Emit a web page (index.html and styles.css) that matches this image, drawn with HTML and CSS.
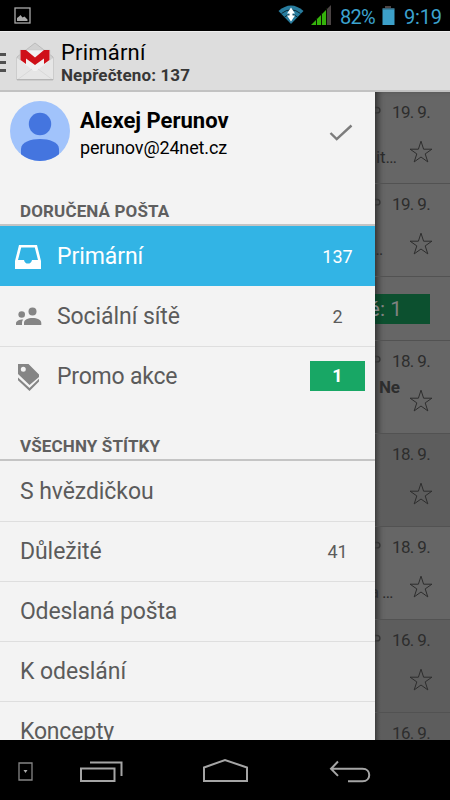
FILE: index.html
```html
<!DOCTYPE html>
<html lang="cs">
<head>
<meta charset="utf-8">
<title>Primární</title>
<link rel="stylesheet" href="styles.css">
</head>
<body>
<svg class="defs" width="0" height="0">
  <symbol id="star" viewBox="0 0 24 24"><path d="M12 1.2l2.600 8h8.300l-6.700 4.700 2.600 8L12 17l-6.800 4.900 2.600-8L1.100 9.200h8.300z" fill="none" stroke="#2d2d2d" stroke-width="1"/></symbol>
  <symbol id="clip" viewBox="0 0 8 10"><path d="M0 1.500h2.200a2.700 2.700 0 0 1 0 5.400H0" fill="none" stroke="#333" stroke-width="1.400"/></symbol>
</svg>
<div class="phone">
  <header class="status">
    <svg class="picture" width="18" height="18" viewBox="0 0 18 18"><rect x="1" y="1" width="15" height="15" fill="none" stroke="#aaa" stroke-width="1.300"/><path d="M3 14v-3l2-1.500 1.500-1.500 2 2.500 2-1 3 3V14z" fill="#aaa"/></svg>
    <svg class="wifi" width="26" height="20" viewBox="0 0 26 20"><path d="M.5 6Q13-5 25.500 6L13 19z" fill="#287c9e"/><path d="M3.500 8.500Q13 1 22.500 8.500M6.500 12Q13 7 19.500 12" fill="none" stroke="#07151c" stroke-width=".8"/><path d="M13 2.500l4 6H9zM13 16.500l-4-6h8z" fill="#fff"/><path d="M11.500 8h3v3h-3z" fill="#fff"/></svg>
    <svg class="signal" width="20" height="20" viewBox="0 0 20 20"><path d="M0 20L16 4v16z" fill="#35b30b"/><path d="M16 4l4-4v20h-4z" fill="#4b4444"/><path d="M5.500 13v7M10.500 8v12M15.500 3v17" stroke="#071600" stroke-width="1"/></svg>
    <span class="percent">82%</span>
    <svg class="battery" width="13" height="19" viewBox="0 0 13 19"><path d="M3 0h6v2H3z" fill="#4b4444"/><path d="M.5 2h12v2H.5z" fill="#35647a"/><path d="M.5 3.500h12V19H.5z" fill="#3ca0c9"/></svg>
    <span class="clock">9:19</span>
  </header>
  <div class="actionbar">
    <div class="burger"><i></i><i></i><i></i></div>
    <svg class="gmail" width="38" height="39" viewBox="0 0 38 39">
      <path d="M1 15L19 1l18 14v23H1z" fill="#d1d1d1" stroke="#bcbcbc"/>
      <path d="M4 8h30v22H4z" fill="#f1f1f1" stroke="#c9c9c9" stroke-width=".6"/>
      <path d="M1 16l18 14 18-14v22H1z" fill="#e6e6e6"/>
      <path d="M1 38l15-11M37 38L22 27" stroke="#d9d9d9" fill="none"/>
      <path d="M4.500 8H10l9 7.500L28 8h5.500v10L28 22v-5.500L19 23l-9-6.500V22l-5.500-4z" fill="#cf1018"/>
      <path d="M1 37.500h36" stroke="#b5b5b5"/>
    </svg>
    <div class="titles"><h1>Primární</h1><p>Nepřečteno: 137</p></div>
  </div>
  <main class="content">
    <nav class="drawer">
      <section class="account">
        <svg class="avatar" width="60" height="60" viewBox="0 0 60 60"><circle cx="30" cy="30" r="30" fill="#a1c3fb"/><circle cx="30" cy="23" r="11.200" fill="#4475df"/><path d="M11 53.200V48c0-7 10-10 19-10s19 3 19 10v5.200A30 30 0 0 1 11 53.200z" fill="#4475df"/></svg>
        <div class="who"><strong>Alexej Perunov</strong><span>perunov@24net.cz</span></div>
        <svg class="check" width="24" height="18" viewBox="0 0 24 18"><path d="M1.500 9l6.200 6.200L22.500 1.500" fill="none" stroke="#7c7c7c" stroke-width="2.400"/></svg>
      </section>
      <h2 class="inbox-heading"><span>DORUČENÁ POŠTA</span></h2>
      <ul>
        <li class="selected">
          <svg width="28" height="26" viewBox="0 0 28 26"><path fill-rule="evenodd" d="M5 1h18l4 16v8H1v-8zM7.200 3.500L4 16h6c.7 2.700 2 3.600 4 3.600s3.300-.9 4-3.600h6L20.800 3.500z" fill="#fff"/></svg>
          <span class="label">Primární</span><span class="count">137</span>
        </li>
        <li class="after-selected">
          <svg width="28" height="26" viewBox="0 0 28 26"><g fill="#858585"><circle cx="18.500" cy="7.400" r="4"/><circle cx="7.700" cy="10.500" r="3.300"/><path d="M10 21v-2c0-3.500 4-5 8.500-5s8.800 1.500 8.800 5v2zM2 21v-1.500c0-2.500 3-4 7.300-4C8 16.700 8 18 8 21z"/></g></svg>
          <span class="label">Sociální sítě</span><span class="count">2</span>
        </li>
        <li>
          <svg width="28" height="28" viewBox="0 0 28 28"><path fill-rule="evenodd" d="M4 1h10.500L25 11.500v2.500l-9.500 8L4 11zM9.300 3.700a2.500 2.500 0 1 0 0 5 2.500 2.500 0 0 0 0-5z" fill="#858585"/><path d="M4 14.500v2.700L15.500 28 25 18.500v-2.700L15.500 25z" fill="#858585"/></svg>
          <span class="label tight">Promo akce</span><span class="count badge">1</span>
        </li>
      </ul>
      <h2 class="labels-heading"><span>VŠECHNY ŠTÍTKY</span></h2>
      <ul class="labels">
        <li><span class="label">S hvězdičkou</span></li>
        <li><span class="label">Důležité</span><span class="count">41</span></li>
        <li><span class="label tight">Odeslaná pošta</span></li>
        <li><span class="label">K odeslání</span></li>
        <li><span class="label tight">Koncepty</span></li>
      </ul>
    </nav>
    <div class="mail">
      <article><div class="top"><svg class="clip"><use href="#clip"/></svg><time>19. 9.</time></div><div class="bottom"><span class="snippet">nit…</span><svg class="star"><use href="#star"/></svg></div></article>
      <article><div class="top"><svg class="clip"><use href="#clip"/></svg><time>19. 9.</time></div><div class="bottom"><span class="snippet dots">…</span><svg class="star"><use href="#star"/></svg></div></article>
      <article class="promo-row"><div class="new">é: 1</div></article>
      <article><div class="top"><svg class="clip"><use href="#clip"/></svg><time>18. 9.</time></div><div class="bottom"><b>Ne</b><svg class="star"><use href="#star"/></svg></div></article>
      <article class="read"><div class="top"><time>18. 9.</time></div><div class="bottom"><svg class="star"><use href="#star"/></svg></div></article>
      <article><div class="top"><svg class="clip"><use href="#clip"/></svg><time>18. 9.</time></div><div class="bottom"><span class="snippet late">a …</span><svg class="star"><use href="#star"/></svg></div></article>
      <article class="read"><div class="top"><svg class="clip"><use href="#clip"/></svg><time>16. 9.</time></div><div class="bottom"><svg class="star"><use href="#star"/></svg></div></article>
      <article class="read"><div class="top"><time>16. 9.</time></div></article>
    </div>
  </main>
  <footer class="navbar">
    <svg width="450" height="60" viewBox="0 0 450 60" fill="none" stroke="#a5a5a5" stroke-width="2">
      <path d="M19 23h13v17H19z" stroke="#858585" stroke-width="1.300"/><path d="M23.500 30h4l-2 3z" fill="#aaa" stroke="none"/>
      <path d="M81 28.500h33.500V41H81zM90 22.500h31.500V36"/>
      <path d="M204 41V27.500L225 20l22 7.500V41z"/>
      <path d="M338 21.500l-7 7.200 7 7.200M331 28.700h31.500c9 0 9 12.600 0 12.600H348"/>
    </svg>
  </footer>
</div>
</body>
</html>
```

FILE: styles.css
```css
* { box-sizing: border-box; }
body { margin: 0; font-family: Roboto, "Liberation Sans", sans-serif; color: #000; }
h1, h2, p, ul { margin: 0; padding: 0; font-weight: 400; }
ul { list-style: none; }
svg { display: block; flex: none; }
.defs { position: absolute; }
.phone { width: 450px; height: 800px; display: flex; flex-direction: column; overflow: hidden; background: #000; }

.status { height: 31px; flex: none; display: flex; align-items: flex-start; color: #3ca3cf; padding: 5px 0 0 14px; }
.picture { margin-top: 2px; }
.wifi { margin-left: 246px; }
.signal { margin-left: 7px; }
.percent, .clock { font-size: 20px; line-height: 24px; white-space: nowrap; }
.percent { width: 37px; margin-left: 9px; letter-spacing: -.75px; }
.battery { margin: 1px 0 0 5px; }
.clock { margin-left: 9px; letter-spacing: -.2px; }

.actionbar { height: 61px; flex: none; display: flex; background: #ddd; border-bottom: 2px solid #c2c2c2; border-top: 1px solid #eee; }
.burger { width: 6px; padding-top: 21px; display: flex; flex-direction: column; gap: 5px; }
.burger i { height: 3px; background: #505050; }
.gmail { margin: 10px 0 0 10px; }
.titles { margin-left: 7px; padding-top: 8px; white-space: nowrap; }
.titles h1 { font-size: 22px; line-height: 26px; letter-spacing: .2px; }
.titles p { font-size: 17px; line-height: 19px; font-weight: 700; color: #373737; letter-spacing: .13px; }

.content { height: 648px; flex: none; display: flex; overflow: hidden; }
.drawer { width: 375px; flex: none; background: #f3f3f3; overflow: hidden; }
.account { height: 103px; padding: 9px 22px 0 10px; display: flex; }
.who { flex: 1; margin-left: 10px; padding-top: 6px; display: flex; flex-direction: column; white-space: nowrap; }
.who strong { font-size: 22px; line-height: 28px; }
.who span { font-size: 18px; line-height: 26px; letter-spacing: -.15px; }
.check { margin-top: 23px; }
h2 { padding-left: 20px; border-bottom: 2px solid #c4c4c4; font-size: 17px; font-weight: 700; line-height: 20px; letter-spacing: .13px; color: #5f5f5f; display: flex; align-items: flex-end; }
.inbox-heading { height: 31px; padding-bottom: 3px; }
.labels-heading { height: 55px; padding-bottom: 3px; }
li { height: 60px; display: flex; align-items: center; padding: 0 10px 0 14px; border-top: 1px solid #dedede; color: #5b5b5b; }
li.selected { background: #32b4e5; color: #fff; border-top-color: #32b4e5; }
li.after-selected, .labels li:first-child { border-top-color: #f3f3f3; }
.label { margin-left: 15px; padding-top: 1px; font-size: 23px; line-height: 30px; letter-spacing: -.08px; white-space: nowrap; }
.tight { letter-spacing: -.2px; }
.labels .label { margin-left: 6px; }
.count { margin-left: auto; width: 55px; padding-top: 1px; text-align: center; font-size: 18px; line-height: 30px; }
.badge { height: 30px; margin-bottom: 1px; background: #18a765; color: #fff; font-weight: 700; padding-top: 0; }

.mail { width: 75px; background: #666; color: #2d2d2d; overflow: hidden; box-shadow: inset 6px 0 6px -3px #303030; }
article { height: 93px; border-bottom: 1px solid #525252; padding: 9px 20px 0 0; overflow: hidden; }
article:first-child { height: 92px; }
.read { background: linear-gradient(90deg, #40404080, #5d5d5d 6px); }
.top { height: 22px; display: flex; }
.top time { margin-left: auto; font-size: 17px; line-height: 22px; letter-spacing: -.65px; white-space: nowrap; }
.clip { width: 8px; height: 10px; margin-top: 5px; }
.bottom { height: 42px; display: flex; }
.star { width: 24px; height: 24px; margin: 17px -3px 0 auto; }
.snippet { width: 22px; display: flex; justify-content: flex-end; font-size: 17px; line-height: 20px; padding-top: 24px; white-space: nowrap; color: #2a2a2a; }
.dots { width: 8px; }
.late { width: 18px; letter-spacing: -.5px; }
.bottom b { font-size: 17px; line-height: 20px; letter-spacing: -.3px; margin: 5px 0 0 4px; }
.promo-row { height: 64px; padding: 17px 20px 0 0; }
.new { height: 30px; background: linear-gradient(90deg, #093b24, #0c502f 8px); color: #818181; font-size: 21px; line-height: 30px; padding-right: 28px; display: flex; justify-content: flex-end; white-space: nowrap; }

.navbar { height: 60px; flex: none; }
```
